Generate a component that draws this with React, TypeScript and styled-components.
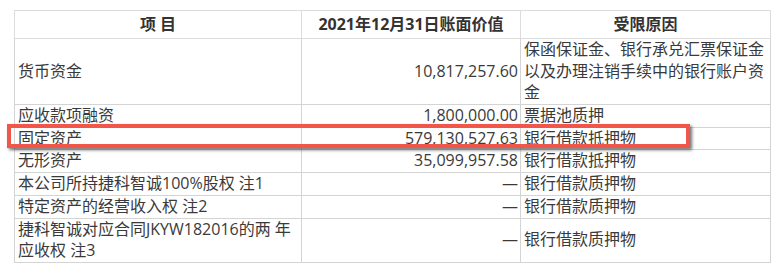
import React from "react";
import styled, { createGlobalStyle } from "styled-components";

const Global = createGlobalStyle`
  html, body { margin: 0; padding: 0; background: #ffffff; }
  body { font-family: "Open Sans", "Noto Sans CJK SC", sans-serif; }
`;

const Page = styled.div`
  width: 777px;
  height: 273px;
  padding: 10px 0 0 14px;
  box-sizing: border-box;
`;

const Wrap = styled.div`
  position: relative;
  width: 756px;
`;

const Table = styled.table`
  border-collapse: collapse;
  table-layout: fixed;
  width: 756px;
  font-family: "Open Sans", "Noto Sans CJK SC", sans-serif;
  font-size: 16px;
  color: #3a3a3a;
`;

const Row = styled.tr<{ $h: number }>`
  height: ${(p) => p.$h}px;
`;

const Head = styled.th`
  border: 1px solid #dcdcdc;
  font-weight: 700;
  color: #333333;
  text-align: center;
  vertical-align: middle;
  padding: 0 3px;
  line-height: 21px;
`;

const Cell = styled.td<{ $align?: "left" | "right" }>`
  border: 1px solid #d4d4d4;
  text-align: ${(p) => p.$align ?? "left"};
  vertical-align: middle;
  padding: 0 2px 0 3px;
  line-height: 21.5px;
  white-space: nowrap;
  overflow: hidden;
`;

const Highlight = styled.div`
  position: absolute;
  left: -7px;
  top: 114px;
  width: 683px;
  height: 24px;
  box-sizing: border-box;
  border: 4px solid #f2554a;
  box-shadow: 2px 2px 3px rgba(0, 0, 0, 0.55);
  pointer-events: none;
`;

type Item = { name: React.ReactNode; value: string; reason: React.ReactNode; h: number };

const rows: Item[] = [
  {
    name: "货币资金",
    value: "10,817,257.60",
    reason: (
      <>
        保函保证金、银行承兑汇票保证金
        <br />
        以及办理注销手续中的银行账户资
        <br />金
      </>
    ),
    h: 66,
  },
  { name: "应收款项融资", value: "1,800,000.00", reason: "票据池质押", h: 22 },
  { name: "固定资产", value: "579,130,527.63", reason: "银行借款抵押物", h: 22 },
  { name: "无形资产", value: "35,099,957.58", reason: "银行借款抵押物", h: 23 },
  { name: "本公司所持捷科智诚100%股权 注1", value: "—", reason: "银行借款质押物", h: 22 },
  { name: "特定资产的经营收入权 注2", value: "—", reason: "银行借款质押物", h: 23 },
  {
    name: (
      <>
        捷科智诚对应合同JKYW182016的两 年
        <br />
        应收权 注3
      </>
    ),
    value: "—",
    reason: "银行借款质押物",
    h: 44,
  },
];

export default function App() {
  return (
    <Page>
      <Global />
      <Wrap>
        <Table>
          <colgroup>
            <col style={{ width: 287 }} />
            <col style={{ width: 219 }} />
            <col style={{ width: 250 }} />
          </colgroup>
          <thead>
            <Row $h={28}>
              <Head>项 目</Head>
              <Head>2021年12月31日账面价值</Head>
              <Head>受限原因</Head>
            </Row>
          </thead>
          <tbody>
            {rows.map((r, i) => (
              <Row key={i} $h={r.h}>
                <Cell>{r.name}</Cell>
                <Cell $align="right">{r.value}</Cell>
                <Cell>{r.reason}</Cell>
              </Row>
            ))}
          </tbody>
        </Table>
        <Highlight />
      </Wrap>
    </Page>
  );
}
